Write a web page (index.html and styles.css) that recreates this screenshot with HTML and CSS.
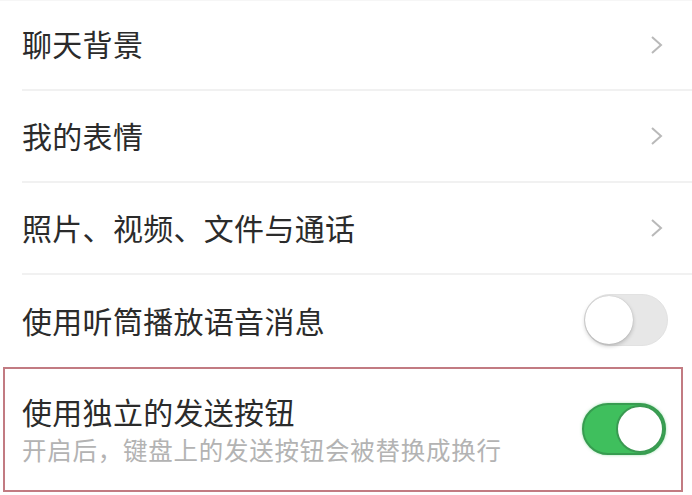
FILE: index.html
```html
<!DOCTYPE html>
<html lang="zh">
<head>
<meta charset="utf-8">
<link rel="stylesheet" href="styles.css">
</head>
<body>
<div class="list">
  <div class="row first">
    <span class="label">聊天背景</span>
    <svg class="chev" width="14" height="20" viewBox="0 0 14 20"><polyline points="2,2 11,10 2,18" fill="none" stroke="#b9b9b9" stroke-width="2"/></svg>
  </div>
  <div class="row">
    <span class="label">我的表情</span>
    <svg class="chev" width="14" height="20" viewBox="0 0 14 20"><polyline points="2,2 11,10 2,18" fill="none" stroke="#b9b9b9" stroke-width="2"/></svg>
  </div>
  <div class="row">
    <span class="label">照片、视频、文件与通话</span>
    <svg class="chev" width="14" height="20" viewBox="0 0 14 20"><polyline points="2,2 11,10 2,18" fill="none" stroke="#b9b9b9" stroke-width="2"/></svg>
  </div>
  <div class="row last">
    <span class="label">使用听筒播放语音消息</span>
    <div class="toggle off"><div class="knob"></div></div>
  </div>
  <div class="highlight">
    <div class="texts">
      <span class="label">使用独立的发送按钮</span>
      <span class="sub">开启后，键盘上的发送按钮会被替换成换行</span>
    </div>
    <div class="toggle on"><div class="knob"></div></div>
  </div>
</div>
</body>
</html>
```
FILE: styles.css
```css
* { box-sizing: border-box; }
html, body { margin: 0; padding: 0; background: #fff; }
body {
  width: 692px;
  height: 495px;
  overflow: hidden;
  font-family: "Noto Sans CJK SC", "Noto Sans", sans-serif;
  color: #2b2b2b;
}
.list {
  display: flex;
  flex-direction: column;
  box-shadow: inset 0 1px 0 #f6f6f6;
}
.row {
  height: 90px;
  display: flex;
  align-items: center;
  justify-content: space-between;
  padding: 0 25px 0 22px;
  position: relative;
}
.row.first { height: 89px; }
.row::after {
  content: "";
  position: absolute;
  left: 22px;
  right: 0;
  bottom: -2px;
  height: 2px;
  background: #f1f1f1;
}
.row + .row { margin-top: 2px; }
.row.last { height: 92px; }
.row.last::after { display: none; }
.label {
  font-size: 30px;
  line-height: 40px;
  letter-spacing: 0.3px;
}
.row .label { margin-bottom: 3px; }
.chev { margin-right: 3px; }
.toggle {
  width: 84px;
  height: 52px;
  border-radius: 26px;
  position: relative;
  flex: none;
}
.toggle.off {
  background: #e7e7e7;
  border: 1px solid #e2e2e2;
  margin-right: -1px;
  margin-bottom: 2px;
}
.toggle .knob {
  position: absolute;
  top: 1px;
  width: 48px;
  height: 48px;
  border-radius: 50%;
  background: #fff;
}
.toggle.off .knob {
  left: 0;
  box-shadow: 0 2px 4px rgba(0,0,0,0.22), 0 0 1px rgba(0,0,0,0.2);
}
.toggle.on {
  background: #3fbf5d;
  border: 2px solid #379c50;
  box-shadow: 0 0 3px rgba(63,191,93,0.5);
}
.toggle.on .knob {
  top: 0;
  right: 0;
  border: 2px solid #3a9a52;
}
.highlight {
  margin: 0 9px 0 3px;
  height: 125px;
  border: 2px solid #c27b82;
  display: flex;
  align-items: center;
  justify-content: space-between;
  padding: 0 15px 2px 17px;
}
.texts {
  display: flex;
  flex-direction: column;
}
.texts .label { line-height: 42px; }
.sub {
  font-size: 24.5px;
  line-height: 36px;
  color: #b3b3b3;
  letter-spacing: 0.75px;
}
```
